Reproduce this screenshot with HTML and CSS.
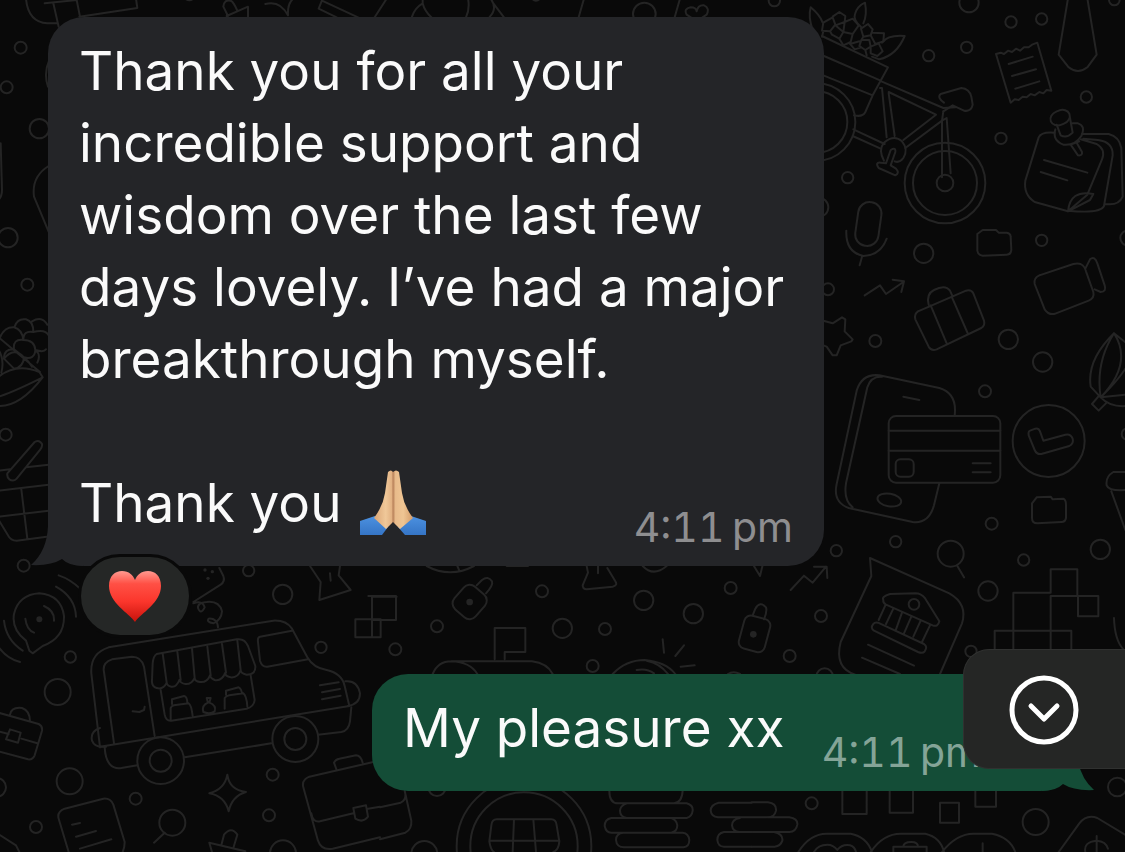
FILE: index.html
```html
<!DOCTYPE html>
<html lang="en">
<head><meta charset="utf-8"><title>Chat</title><link rel="stylesheet" href="styles.css"></head>
<body>
<svg class="wallpaper" viewBox="0 0 1125 852" preserveAspectRatio="xMinYMin slice" aria-hidden="true">
<!-- bicycle, receipt, tie, notes -->
<g transform="translate(800 0) scale(.33333)">
<circle cx="507" cy="8" r="29"/><circle cx="633" cy="66" r="17"/><circle cx="725" cy="57" r="17"/><circle cx="500" cy="142" r="17"/><circle cx="386" cy="167" r="17"/><circle cx="943" cy="0" r="16"/><circle cx="859" cy="291" r="17"/><circle cx="603" cy="415" r="17"/><circle cx="143" cy="533" r="17"/><circle cx="371" cy="760" r="29"/><circle cx="725" cy="721" r="17"/><circle cx="56" cy="622" r="29"/><circle cx="983" cy="714" r="22"/>
<path d="M38 90Q24 50 32 22Q60 45 68 68M184 82Q158 60 165 42Q172 18 195 8Q202 46 190 70M246 128Q264 104 314 108Q290 166 238 178L216 170"/>
<path d="M70 68L98 52L106 74L90 94L66 92ZM98 50L118 36L136 48L134 66L106 76M134 66L158 56L176 76L158 102L130 96ZM106 76L130 96L118 116L96 104L90 94M70 94L66 110M118 116L130 136L152 126L158 102M183 86L204 72L218 88L212 106L190 110ZM218 98L252 100L250 124L226 132L212 106M184 120L190 110M184 120L208 120L212 140L196 150L178 138ZM150 132L178 124M152 134L164 148L184 142M212 140L236 130L248 154L232 168L212 160ZM196 150L200 166"/>
<path d="M66 108L264 202L218 286L70 226M72 168L242 242M218 286L196 336Q188 352 162 346M244 244L430 324L466 322M240 264H246L260 412M266 276L408 344L310 420M266 280L284 408M430 334L426 362L440 354L452 520M426 362L426 532M426 362L316 444M160 388L254 432M158 408L242 446"/>
<path d="M432 308Q410 292 422 282L484 264Q508 266 514 290L518 314Q514 336 492 332L458 316L430 334"/>
<circle cx="50" cy="366" r="116"/><circle cx="50" cy="366" r="92"/><circle cx="435" cy="549" r="121"/><circle cx="435" cy="549" r="96"/><circle cx="435" cy="549" r="25"/>
<path d="M252 482Q234 450 252 428Q282 402 306 424Q326 448 310 474Q298 490 284 484M272 450Q288 440 286 456L272 496L288 506Q300 520 286 526L236 504Q224 486 242 488L258 490Z"/>
<path d="M588 162L602 158L612 162L624 152L636 156L648 146L660 152L672 142L686 142L696 134L712 128L754 272L740 270L730 280L718 276L704 286L692 282L680 292L668 290L656 300L644 298L632 308ZM626 192L698 170M636 228L708 208M646 266L718 244"/>
<path d="M804 -5L776 164L806 202Q834 224 862 202L890 164L862 -5"/>
<rect x="750" y="332" width="60" height="42" rx="26" transform="rotate(-22 780 352)"/><path d="M770 374L782 406Q800 416 818 398L810 354M766 388Q756 420 790 434Q824 438 844 408Q858 378 834 370H818M838 424L812 434L834 466Q848 468 846 456L830 428"/>
<path d="M764 398Q724 394 716 412L676 542Q670 584 704 606L804 634L862 584L906 478Q918 448 890 432L842 418M804 634L870 600L880 582Q810 568 804 634M850 416L894 420Q940 426 938 466L912 618Q900 642 804 632M846 402H926Q958 410 964 444L968 590Q956 618 916 612M732 480L862 518M722 516L802 541"/>
<rect x="170" y="606" width="70" height="132" rx="34" transform="rotate(8 205 672)"/><path d="M139 692Q136 756 190 768Q242 766 260 716M186 770L179 796"/>
<path d="M532 702L548 690H588L596 698H620Q632 700 632 710L634 750Q632 764 620 764L548 767Q534 766 532 752Z"/>
</g>
<!-- suitcase, phone and card, clock -->
<g transform="translate(800 270) scale(.33333)">
<circle cx="84" cy="58" r="18"/><circle cx="226" cy="213" r="18"/><circle cx="625" cy="208" r="29"/><circle cx="728" cy="276" r="29"/><circle cx="555" cy="364" r="18"/><circle cx="575" cy="761" r="18"/><circle cx="287" cy="815" r="17"/><circle cx="982" cy="492" r="17"/>
<path d="M194 76L240 46L258 72L310 36M278 29L312 34L304 66M70 152L98 160L126 142L136 148L134 184L158 208L154 214L122 226L110 256L98 256L80 230L70 226"/>
<path d="M354 124L498 62Q514 58 520 70L552 152Q556 166 544 174L410 238Q394 244 386 230L346 148Q342 132 354 124M392 106L440 220M456 82L504 192M386 104Q378 72 402 60Q436 42 450 62L458 80"/>
<path d="M718 16L820 -18Q850 -26 858 4L880 66Q884 84 866 92L768 130Q748 138 734 118L704 42Q700 24 718 16M856 -4L870 -32Q884 -44 892 -20L914 46Q920 66 902 66L884 58"/>
<path d="M418 640L402 706Q386 762 338 756L146 714Q98 696 110 642L170 362Q186 310 238 316L418 354Q472 370 464 436M246 320Q212 318 202 352L138 640Q130 690 158 712M310 380L358 390"/><ellipse cx="268" cy="690" rx="36" ry="19" transform="rotate(10 268 690)"/>
<rect x="266" y="438" width="335" height="200" rx="22"/><path d="M266 482H601M266 542H601M518 580H572M518 607H572"/><rect x="287" y="568" width="54" height="52" rx="14"/>
<circle cx="746" cy="513" r="108"/><path d="M690 482L706 476Q716 474 720 484L730 512L796 494Q812 490 818 506Q822 520 808 528L724 552Q710 554 704 540L686 496Q684 484 690 482Z"/>
<path d="M942 190Q860 270 872 350L902 382Q886 278 942 190L980 220M942 190Q1000 280 902 382Q956 330 980 290M902 382L980 374M902 382Q930 412 980 408M898 376L876 402L896 422L920 398M980 606H940Q916 620 920 646Q926 664 980 660M934 664L976 780"/>
<path d="M696 700L710 682L752 680L758 688L790 686Q798 690 798 704V744Q796 756 784 756L712 760Q696 760 696 744Z"/>
</g>
<!-- bank letter, blocks, coins -->
<g transform="translate(740 530) scale(.33333)">
<circle cx="289" cy="62" r="17"/><circle cx="632" cy="71" r="39"/><circle cx="851" cy="90" r="17"/><circle cx="1081" cy="58" r="29"/><circle cx="744" cy="183" r="29"/><circle cx="243" cy="258" r="18"/><circle cx="149" cy="378" r="18"/><circle cx="693" cy="364" r="17"/><circle cx="254" cy="440" r="25"/><circle cx="215" cy="820" r="18"/><circle cx="1132" cy="771" r="28"/><circle cx="887" cy="876" r="39"/>
<path d="M652 108L672 142M152 180L192 137L218 158L258 110M222 110H260L262 144M40 105L60 138L68 105"/>
<path d="M600 432L666 280Q684 222 628 190L390 84L394 138L302 336Q282 414 346 434M384 344L522 407M366 383L480 432"/>
<path d="M430 210Q424 200 450 192L526 190Q544 190 556 206L598 274Q594 292 578 286L438 224Q428 218 430 210M436 226L416 270M460 236L438 282M486 248L468 298M514 260L492 310M542 272L520 320M570 286L546 336M414 278L552 342Q564 350 554 364Q548 372 534 366L402 302Q390 294 400 282Q404 276 414 278Z"/><circle cx="522" cy="223" r="16"/>
<path d="M820 356V188H932V118H1012V198H932V356M1012 198H1075V259H1014V198M764 356V302H994V356M1122 264Q1124 330 1150 358"/>
<rect x="4" y="260" width="80" height="102" rx="20" transform="rotate(15 42 310)"/><circle class="dot" cx="40" cy="313" r="10"/><path d="M38 256L46 236Q60 212 78 232Q82 244 72 268"/>
<path d="M307 780V852H380V780M449 780V848H519V780M706 780V830H768V780M600 818H657V878H600Z"/>
<path d="M35 817H84Q110 820 108 842Q104 862 82 862M82 862H148Q174 866 172 884Q168 906 148 906H35M102 906Q130 912 127 932Q122 948 104 950H35"/>
<path d="M175 966Q210 910 262 911H332Q380 920 396 966M392 966Q430 910 484 911H556Q602 922 612 966M606 966Q650 910 702 911H756Q810 922 826 966M222 966Q234 944 262 944Q280 944 292 960Q306 942 330 946Q344 950 348 966M460 966V950H560V966M490 950Q490 936 514 936Q534 936 534 950M728 940V966M956 966L1018 880Q1040 852 1072 864L1155 914M1070 918V966M1036 966Q1030 936 1070 932Q1098 934 1104 956"/>
</g>
<!-- van, podcast bubble, briefcases -->
<g transform="translate(0 540) scale(.33333)">
<circle cx="71" cy="77" r="18"/><circle cx="746" cy="92" r="17"/><circle cx="848" cy="163" r="29"/><circle cx="211" cy="351" r="17"/><circle cx="963" cy="322" r="17"/><circle cx="173" cy="456" r="39"/><circle cx="209" cy="724" r="39"/><circle cx="-10" cy="742" r="28"/><circle cx="818" cy="704" r="18"/><circle cx="807" cy="826" r="18"/><circle cx="407" cy="776" r="18"/><circle cx="108" cy="861" r="18"/><circle cx="517" cy="848" r="39"/><circle cx="849" cy="940" r="39"/>
<path d="M78 302Q34 268 42 222Q56 164 118 160Q184 166 192 228Q194 294 128 318L98 340L88 332ZM76 236Q80 270 102 278M132 198Q164 212 162 242M168 140Q226 172 228 230M176 106Q212 118 240 146M12 242Q18 300 68 332M-5 320Q20 356 60 366"/><circle class="dot" cx="118" cy="238" r="9"/>
<path d="M580 186L662 134Q676 124 670 108L658 84M580 190Q608 180 614 202Q602 226 594 204Q592 188 620 186Q658 182 666 214Q664 240 640 250Q618 246 626 236Q652 234 654 262"/><circle class="dot" cx="615" cy="90" r="5"/><circle class="dot" cx="637" cy="95" r="5"/><circle class="dot" cx="624" cy="115" r="5"/>
<path d="M930 78L962 126L958 180L1052 150L1016 106L1020 78M990 100L992 122M1116 240V170H1190M1066 238H1142V292H1066ZM1116 240V292"/>
<path d="M300 622L274 400Q270 340 326 322L820 242Q858 240 876 266L922 352Q940 384 980 390Q1026 400 1034 438L1048 498L300 620M314 622Q318 690 364 684L412 676M554 652L814 610M954 584L1024 576Q1046 572 1050 544L1054 502M876 272L780 290Q772 292 774 306L780 362Q786 382 802 380L924 358"/>
<path d="M342 610L312 396Q306 368 336 358L396 350Q424 350 432 380L464 588M398 514L418 516L432 510L434 500M300 564Q270 574 276 602Q284 624 318 620M1036 424Q1072 420 1080 460Q1080 492 1044 498M960 436L1016 427M966 457L1020 447M966 478L1022 467"/>
<circle cx="482" cy="662" r="70"/><circle cx="482" cy="662" r="33"/><circle cx="886" cy="597" r="69"/><circle cx="886" cy="597" r="33"/>
<path d="M470 342L710 298Q734 294 744 318L766 378Q768 404 740 404Q722 400 722 390Q714 414 692 412Q674 408 676 398Q666 424 644 420Q630 414 630 406Q622 428 600 426Q584 424 584 414Q574 434 556 432Q542 430 538 420Q530 442 514 440Q502 438 500 428Q490 450 470 444Q454 440 456 420L458 370Q460 348 470 342M488 340L500 428M532 334L542 420M576 326L584 414M622 320L632 406M666 312L678 398M712 302L722 390"/>
<path d="M482 450L494 524Q498 544 514 542L740 506Q762 500 764 480L752 406M512 538V504Q514 498 522 496L566 490Q574 494 578 528M516 492V478L552 468Q562 470 562 490M674 506V474Q678 468 688 466L730 460Q740 468 742 500M678 464V452L716 442Q724 446 726 460M610 516Q604 496 624 488L620 474H632L628 488Q650 496 644 514Q630 524 610 516"/>
<path d="M-5 518L116 552Q128 558 126 572L104 646Q98 660 84 658L-5 634M-5 574L26 582M64 596L112 610M30 568L62 578L54 608L18 598ZM30 524Q34 500 66 504Q90 512 90 544"/>
<path d="M682 704Q688 750 738 756Q696 768 686 814Q674 768 628 760Q674 748 682 704M494 878L462 908M636 936L628 908L736 934M664 916L672 884Q694 858 712 884L700 924"/>
<path d="M206 936L176 836Q170 816 194 806L310 776Q332 774 340 794L374 906Q374 924 368 936M216 854L240 849M228 890L288 873M240 926L334 898M-5 882L48 916L58 936"/>
<path d="M1120 666L928 710Q904 720 910 742L954 902Q964 932 998 926L1140 892M934 820Q938 848 960 844L1060 820M1104 806L1140 800M1060 804L1098 796L1104 830Q1088 850 1066 836ZM1010 690L1002 668Q1006 658 1018 656L1068 646Q1082 646 1088 668"/>
</g>
<!-- padlock, mailbox, globe, coins -->
<g transform="translate(370 540) scale(.33333)">
<circle cx="516" cy="154" r="18"/><circle cx="201" cy="259" r="18"/><circle cx="76" cy="328" r="18"/><circle cx="577" cy="265" r="29"/><circle cx="705" cy="267" r="18"/><circle cx="821" cy="181" r="29"/><circle cx="970" cy="221" r="29"/><circle cx="1082" cy="144" r="18"/><circle cx="668" cy="378" r="18"/><circle cx="163" cy="942" r="39"/><circle cx="201" cy="742" r="26"/>
<rect x="254" y="144" width="90" height="84" rx="24" transform="rotate(-49 299 186)"/><circle class="dot" cx="299" cy="186" r="10"/><path d="M320 136L336 120Q354 106 366 124Q370 136 348 160"/>
<path d="M170 78Q240 116 312 78M262 78L268 92M650 78L654 98L638 136Q638 148 650 148L728 140Q744 136 736 124L712 84M684 78V100M818 78Q850 112 890 78M-5 168H78V240H6M410 78H474"/>
<path d="M374 358V264H466V336H404V358M188 402Q204 364 244 364H486Q532 370 548 402M244 364Q300 366 322 402M728 402Q768 360 824 360Q888 366 916 402M800 390Q830 384 852 400M830 362Q870 370 894 402M878 298L882 338M942 316L916 348M932 380L974 376"/>
<path d="M104 752L124 842Q126 868 106 878L30 898M30 802L92 788Q108 780 106 764"/>
<circle cx="462" cy="918" r="202"/><circle cx="462" cy="918" r="161"/><path d="M380 838H544Q558 838 560 856L568 904Q566 930 550 936M380 838Q366 838 364 856L358 904Q362 930 372 936M358 902H568M432 838L428 936M490 838L498 936"/>
<path d="M718 752Q718 790 744 790H950Q970 796 968 812Q966 830 950 834H770Q750 830 750 812Q750 798 770 790H912Q936 788 938 752M770 834H724Q704 838 704 858Q708 878 724 878H904Q922 874 922 856Q920 840 904 834M760 878Q738 880 738 900Q740 922 762 922H940Q958 920 958 900Q956 880 938 878H904M1145 788H1046Q1022 794 1022 812Q1024 830 1044 832H1190M1110 834Q1086 838 1086 856Q1088 874 1108 876M1145 876H1062Q1042 880 1042 900Q1044 920 1062 920H1145M1074 402Q1090 392 1110 402"/>
</g>
<!-- left edge -->
<g transform="scale(.33333)">
<circle cx="62" cy="143" r="18"/><circle cx="20" cy="262" r="18"/><circle cx="118" cy="386" r="29"/><circle cx="24" cy="713" r="29"/><circle cx="82" cy="854" r="18"/>
<path d="M78 -4Q84 66 142 70H170M134 10L230 0M160 10L176 80M230 0L240 50M148 180Q130 220 144 260M146 498Q94 530 102 590L148 700M2 430L6 570Q6 590 -5 600"/>
</g>
<g transform="translate(0 290) scale(.33333)">
<circle cx="17" cy="434" r="18"/>
<path d="M0 142Q14 110 42 112Q66 118 70 150Q38 146 42 178Q12 176 12 206M44 110Q52 84 78 88Q100 94 100 126Q70 120 70 150Q104 150 106 180Q132 188 138 178M96 94Q126 76 142 104M100 126Q136 116 146 136M12 206L42 236Q70 232 72 202Q104 210 106 180M-4 142L120 246M42 178L72 202M12 206Q42 170 72 202M72 202Q86 214 96 230M106 180Q124 194 112 218M-4 260Q50 218 118 246L128 262Q60 350 -4 348M-4 320Q40 306 128 262M-4 180Q14 210 4 248"/>
<path d="M22 550L104 456Q118 448 126 462Q128 470 120 480L50 566Q40 576 28 568Q20 560 22 550M-4 542L30 538M78 532L146 524M-4 602L146 584M-4 680L146 662M-4 690L24 736Q32 752 50 752L140 740M64 598L82 746"/>
</g>
<!-- top edge -->
<g transform="translate(70 0) scale(.33333)">
<path d="M28 50L202 24L198 -4M346 -4Q358 6 370 -4M474 48L460 20Q462 -2 482 2Q490 4 502 32M470 48L534 20V52M586 12Q630 0 654 46Q652 10 670 -4M758 -4L746 26L800 52M756 2L864 52M950 -4L914 52M1026 50Q1034 24 1058 10Q1064 34 1084 52M1058 10V-4"/>
</g>
<g transform="translate(450 0) scale(.33333)">
<circle cx="583" cy="42" r="34"/><circle cx="973" cy="2" r="17"/><circle cx="258" cy="-12" r="14"/>
<path d="M54 -4Q60 26 48 52M122 -4Q144 26 118 52M130 10L162 52M402 -4L386 52M690 -4L674 52M740 64L710 44Q700 26 722 22Q738 22 740 34Q744 14 762 16Q780 24 770 44Z"/>
</g>
</svg>
<main class="chat">
 <article class="bubble incoming">
  <p>Thank you for all your incredible support and wisdom over the last few days lovely. I’ve had a major breakthrough myself.</p>
  <div class="last"><p>Thank you
   <svg class="hands" viewBox="0 0 66 66" role="img" aria-label="folded hands"><defs><linearGradient id="skin"><stop stop-color="#d9a475"/><stop offset=".3" stop-color="#f0c899"/><stop offset=".45" stop-color="#e2b283"/><stop offset=".49" stop-color="#b9825a"/><stop offset=".55" stop-color="#e8bb8b"/><stop offset=".75" stop-color="#efc593"/><stop offset="1" stop-color="#d39b68"/></linearGradient><linearGradient id="blue" x2="0" y2="1"><stop stop-color="#4c91e0"/><stop offset="1" stop-color="#3575c6"/></linearGradient></defs><path fill="url(#blue)" d="M0 51L15 46L28 57L22 65H0ZM66 51L51 46L38 57L45 65H66Z"/><path fill="url(#skin)" d="M28 2Q31-1 33 2Q36-1 39 2L42 23Q44 36 53 48L40 59L33 52L26 59L14 48Q23 36 25 23Z"/></svg></p>
   <time>4:11&#8201;pm</time></div>
  <svg class="tail" viewBox="0 0 52 40" aria-hidden="true"><path d="M17 0Q16 25 0 39Q20 40 31 33Q38 40 52 40V0Z"/></svg>
 </article>
 <div class="reaction"><svg viewBox="0 0 52 51" role="img" aria-label="red heart"><defs><linearGradient id="red" x2="0" y2="1"><stop stop-color="#ff9a90"/><stop offset=".25" stop-color="#ff5045"/><stop offset=".6" stop-color="#fb362c"/><stop offset="1" stop-color="#c8120b"/></linearGradient></defs><path fill="url(#red)" d="M26 51C20 42 0 32 0 15C0 5 6 0 13 0C20 0 24 4 26 9C28 4 32 0 39 0C46 0 52 5 52 15C52 32 32 42 26 51Z"/></svg></div>
 <article class="bubble outgoing">
  <p>My pleasure xx</p><time>4:11&#8201;pm</time>
  <svg class="tail" viewBox="0 0 52 40" aria-hidden="true"><path d="M17 0Q16 25 0 39Q20 40 31 33Q38 40 52 40V0Z"/></svg>
 </article>
</main>
<button class="jump" aria-label="Scroll to latest message"><svg viewBox="0 0 70 70" aria-hidden="true"><circle cx="35" cy="35" r="32"/><path d="M22 31L35 44L48 31"/></svg></button>
</body></html>
```
FILE: styles.css
```css
*{box-sizing:border-box}
body{margin:0;min-height:100vh;background:#090909;color:#fafafa;font-family:Inter,"Liberation Sans",sans-serif;font-size:53px;line-height:72px;position:relative;overflow:hidden}
p{margin:0}
.wallpaper{position:absolute;inset:0;width:100%;height:100%;fill:none;stroke:#242424;stroke-width:2;stroke-linejoin:round;stroke-linecap:round}
.wallpaper g{stroke-width:6}
.wallpaper .dot{fill:#242424;stroke:none}
.chat{position:relative;display:flex;flex-direction:column;align-items:flex-start;padding:17px 48px 0}
.bubble{position:relative;border-radius:36px}
.incoming{width:776px;max-width:100%;background:#242528;padding:18px 31px 27px}
.last{display:flex;justify-content:space-between;align-items:flex-end;margin-top:72px}
.last p{display:flex;align-items:center;gap:18px}
.last time{margin-bottom:-12px}
.hands{width:66px;height:66px}
time{font-size:41px;line-height:48px;color:#8e8e90;font-variant-numeric:tabular-nums}
.tail{position:absolute;bottom:0;left:-17px;width:52px;height:40px;fill:#242528}
.reaction{position:relative;display:flex;align-items:center;justify-content:center;width:114px;height:84px;margin:-12px 0 36px 30px;border:3px solid #090909;border-radius:42px;background:#252726}
.reaction svg{width:52px;height:51px}
.outgoing{align-self:flex-end;display:flex;justify-content:space-between;align-items:flex-end;width:705px;max-width:100%;background:#144d37;padding:18px 96px 15px 31px}
.outgoing p{padding-bottom:12px}
.outgoing time{color:#84a497}
.outgoing .tail{left:auto;right:-17px;fill:#144d37;transform:scaleX(-1)}
.jump{position:absolute;right:0;top:649px;width:162px;height:120px;padding:2px 2px 0 0;border:1px solid #303130;border-right:0;border-radius:26px 0 0 26px;background:#252625;display:flex;align-items:center;justify-content:center}
.jump svg{width:70px;height:70px;fill:none;stroke:#fff;stroke-width:5;stroke-linecap:round;stroke-linejoin:round}
```
